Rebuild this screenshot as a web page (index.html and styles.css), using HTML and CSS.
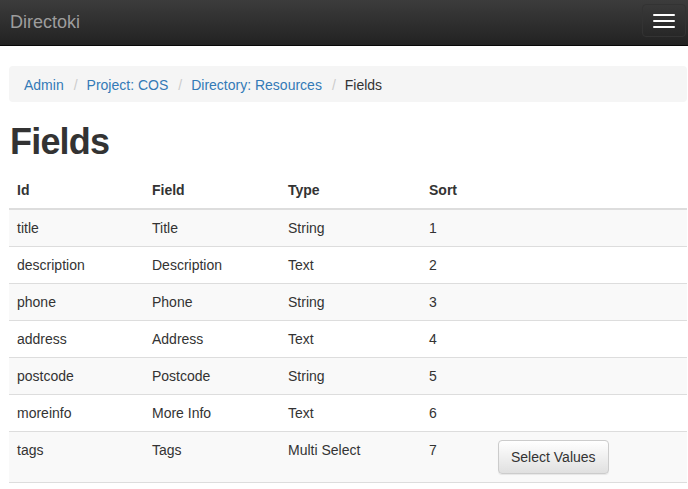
FILE: index.html
```html
<!DOCTYPE html>
<html>
<head>
<meta charset="utf-8">
<title>Fields</title>
<link rel="stylesheet" href="styles.css">
</head>
<body>
<nav class="navbar">
  <a class="brand" href="#">Directoki</a>
  <button class="toggle" type="button" aria-label="Toggle navigation">
    <span class="bar"></span><span class="bar"></span><span class="bar"></span>
  </button>
</nav>
<div class="container">
  <ol class="breadcrumb">
    <li><a href="#">Admin</a></li>
    <li class="sep">/</li>
    <li><a href="#">Project: COS</a></li>
    <li class="sep">/</li>
    <li><a href="#">Directory: Resources</a></li>
    <li class="sep">/</li>
    <li class="active">Fields</li>
  </ol>
  <h1 class="title">Fields</h1>
  <table class="table">
    <thead>
      <tr><th class="c1">Id</th><th class="c2">Field</th><th class="c3">Type</th><th class="c4">Sort</th><th class="c5"></th></tr>
    </thead>
    <tbody>
      <tr><td>title</td><td>Title</td><td>String</td><td>1</td><td></td></tr>
      <tr><td>description</td><td>Description</td><td>Text</td><td>2</td><td></td></tr>
      <tr><td>phone</td><td>Phone</td><td>String</td><td>3</td><td></td></tr>
      <tr><td>address</td><td>Address</td><td>Text</td><td>4</td><td></td></tr>
      <tr><td>postcode</td><td>Postcode</td><td>String</td><td>5</td><td></td></tr>
      <tr><td>moreinfo</td><td>More Info</td><td>Text</td><td>6</td><td></td></tr>
      <tr><td>tags</td><td>Tags</td><td>Multi Select</td><td>7</td><td><button class="btn" type="button">Select Values</button></td></tr>
    </tbody>
  </table>
</div>
</body>
</html>
```
FILE: styles.css
```css
* { box-sizing: border-box; }
html, body { margin: 0; padding: 0; }
body {
  font-family: "Liberation Sans", Arial, sans-serif;
  font-size: 14px;
  line-height: 20px;
  color: #333;
  background: #fff;
}
a { color: #337ab7; text-decoration: none; }

.navbar {
  height: 46px;
  background: linear-gradient(to bottom, #3c3c3c 0%, #222 100%);
  border-bottom: 1px solid #080808;
  display: flex;
  align-items: flex-start;
  justify-content: space-between;
  margin-bottom: 20px;
}
.brand {
  color: #9d9d9d;
  font-size: 18px;
  line-height: 20px;
  padding: 12px 10px 10px;
}
.toggle {
  margin: 4px 2px 0 0;
  width: 44px;
  height: 33px;
  padding: 0;
  background: transparent;
  border: 1px solid #333;
  border-radius: 4px;
  display: flex;
  flex-direction: column;
  align-items: center;
  justify-content: center;
  gap: 4px;
}
.bar {
  display: block;
  width: 22px;
  height: 2px;
  background: #fff;
  border-radius: 1px;
}

.container {
  margin: 0 1px 0 9px;
}
.breadcrumb {
  list-style: none;
  margin: 0 0 20px;
  padding: 9px 15px 7px;
  background: #f5f5f5;
  border-radius: 4px;
  display: flex;
}
.breadcrumb li { display: block; }
.breadcrumb .sep { color: #ccc; padding: 0 9px 0 10px; }
.breadcrumb .active { color: #333; }

.title {
  font-size: 36px;
  font-weight: 700;
  line-height: 40px;
  margin: 0 0 10px 1px;
  letter-spacing: -0.8px;
  color: #333;
}

.table {
  width: 100%;
  border-collapse: collapse;
  border-spacing: 0;
  border-bottom: 1px solid #ddd;
}
.table th, .table td {
  padding: 8px;
  text-align: left;
  vertical-align: top;
  line-height: 20px;
}
.table th {
  font-weight: 700;
  border-bottom: 2px solid #ddd;
}
.table td { border-top: 1px solid #ddd; }
.table tbody tr:nth-child(odd) { background: #f9f9f9; }
.c1 { width: 135px; }
.c2 { width: 136px; }
.c3 { width: 141px; }
.c4 { width: 69px; }

.btn {
  font-family: inherit;
  font-size: 14px;
  line-height: 20px;
  color: #333;
  padding: 6px 12px;
  border: 1px solid #ccc;
  border-radius: 4px;
  background: linear-gradient(to bottom, #fff 0%, #e0e0e0 100%);
  box-shadow: inset 0 1px 0 rgba(255,255,255,.15), 0 1px 1px rgba(0,0,0,.075);
  cursor: pointer;
}
```
